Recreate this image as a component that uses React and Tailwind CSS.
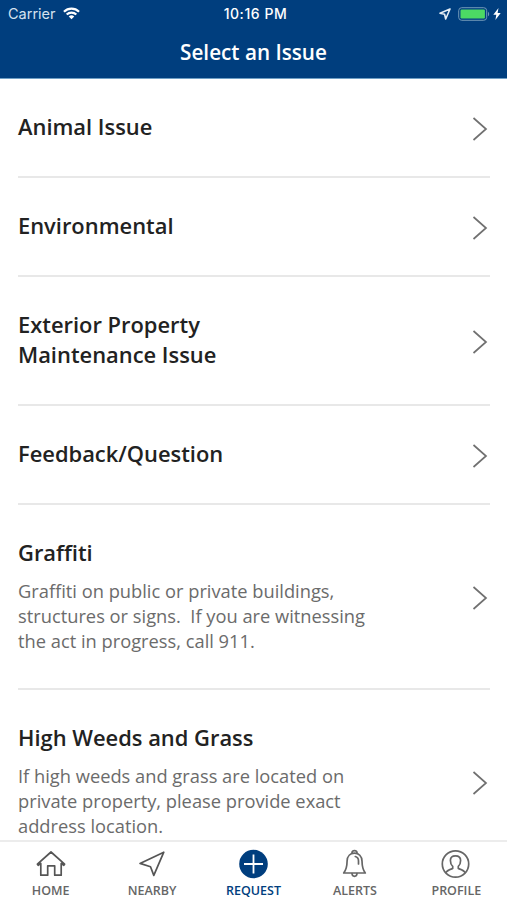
import React from "react";

const issues = [
  { title: "Animal Issue" },
  { title: "Environmental" },
  { title: "Exterior Property\nMaintenance Issue" },
  { title: "Feedback/Question" },
  {
    title: "Graffiti",
    description:
      "Graffiti on public or private buildings,\nstructures or signs.  If you are witnessing\nthe act in progress, call 911.",
  },
  {
    title: "High Weeds and Grass",
    description:
      "If high weeds and grass are located on\nprivate property, please provide exact\naddress location.",
  },
];

const HomeIcon = () => (
  <svg width="30" height="30" viewBox="0 0 30 30" fill="none" stroke="#555" strokeWidth="1.7" strokeLinejoin="round" strokeLinecap="round">
    <path d="M4.8 14.4 2.2 16.3 1.4 15.2 15 3l13.6 12.2-.8 1.1-2.6-1.9v11.8h-6.5v-9.4h-7v9.4H4.8z" />
  </svg>
);

const NearbyIcon = () => (
  <svg width="30" height="30" viewBox="0 0 30 30" fill="none" stroke="#555" strokeWidth="1.7" strokeLinejoin="round">
    <path d="M26.8 3.2 3 14.4l10.5 3.3 3.3 8.7z" />
  </svg>
);

const RequestIcon = () => (
  <svg width="30" height="30" viewBox="0 0 30 30" fill="none">
    <circle cx="14.5" cy="15" r="14.3" fill="#003e7e" />
    <path d="M14.5 5.5v19M5 15h19" stroke="#fff" strokeWidth="1.8" />
  </svg>
);

const AlertsIcon = () => (
  <svg width="30" height="30" viewBox="0 0 30 30" fill="none" stroke="#666" strokeWidth="1.7" strokeLinejoin="round" strokeLinecap="round">
    <path d="M12 3.8c.3-2.8 4.700-2.8 5 0" />
    <path d="M3.700 24c2.500-3 3.300-6 3.400-12 .1-4.800 3.200-7.900 7.400-7.900s7.400 3.100 7.500 7.900c.1 6 .8 9 3.300 12z" />
    <path d="M12 24.500c.2 3.700 4.800 3.700 5 0M15.300 7.500c2 .5 3.200 2 3.200 4.500v3" />
  </svg>
);

const ProfileIcon = () => (
  <svg width="30" height="30" viewBox="0 0 30 30" fill="none" stroke="#666" strokeWidth="1.7" strokeLinejoin="round">
    <circle cx="14.5" cy="15" r="13.2" />
    <path d="M4.900 23.800c.8-2.300 3.300-3 6.800-4.300v-2.200c-1.800-1.500-2.300-3.300-2.300-5.800 0-3.200 2-4.700 5.100-4.700s5.100 1.500 5.100 4.700c0 2.500-.5 4.300-2.300 5.800v2.200c3.500 1.300 6 2 6.800 4.300" />
  </svg>
);

const tabs = [
  { label: "HOME", icon: HomeIcon },
  { label: "NEARBY", icon: NearbyIcon },
  { label: "REQUEST", icon: RequestIcon, active: true },
  { label: "ALERTS", icon: AlertsIcon },
  { label: "PROFILE", icon: ProfileIcon },
];

const StatusBar = () => (
  <div className="grid h-[27px] grid-cols-3 items-center pl-2 pr-1 font-['Inter','Liberation_Sans',sans-serif] text-[14px] text-white">
    <div className="flex items-center gap-[7px]">
      <span className="text-[14.5px] text-[#d5e2ef]">Carrier</span>
      <svg width="17" height="13" viewBox="0 0 18 13" fill="none" stroke="#fff" strokeWidth="2.3">
        <path d="M1 4.600a11.500 11.500 0 0 1 16 0M3.900 7.600a7.400 7.400 0 0 1 10.200 0" />
        <path d="M9 12.600 6.100 9.700a4.200 4.200 0 0 1 5.800 0z" fill="#fff" stroke="none" />
      </svg>
    </div>
    <span className="text-center tracking-[0.04em] font-medium whitespace-nowrap">10:16 PM</span>
    <div className="flex items-center justify-end">
      <svg width="12" height="12" viewBox="0 0 12 12" fill="none" stroke="#e4edf5" strokeWidth="1.6" strokeLinejoin="round">
        <path d="M11 1 1 5.300l4.600 1L6.700 11z" />
      </svg>
      <svg className="ml-[7px]" width="32" height="14" viewBox="0 0 32 14" fill="none">
        <rect x=".7" y=".7" width="28" height="12.6" rx="3" stroke="#7199b8" />
        <rect x="2.5" y="2.5" width="24.4" height="9" rx="1.2" fill="#4cd964" />
        <path d="M30 4.700c1.600.7 1.600 3.900 0 4.600z" fill="#7199b8" />
      </svg>
      <svg className="ml-[3px] mr-[2px]" width="8" height="12" viewBox="0 0 8 12" fill="#fff">
        <path d="M5.500 0 .3 6.800h3L2.400 12l5.300-7H4.600z" />
      </svg>
    </div>
  </div>
);

const IssueRow = ({ title, description }) => (
  <li className="flex shrink-0 items-center justify-between border-b-2 border-[#e8e8e8] pt-[33px] pb-[34px]">
    <div className="whitespace-pre">
      <h2 className="text-[21.9px] leading-[30px] font-semibold text-[#222]">{title}</h2>
      {description && (
        <p className="mt-[10px] mb-px text-[18.3px] leading-[25px] text-[#6b6b6b]">{description}</p>
      )}
    </div>
    <svg className="mt-[3px] mr-[2px] shrink-0" width="16" height="24" viewBox="0 0 16 24" fill="none" stroke="#707070" strokeWidth="1.7">
      <path d="M1.500 1 14 12 1.500 23" />
    </svg>
  </li>
);

const App = () => {
  return (
    <div className="flex h-[900px] w-[507px] flex-col overflow-hidden bg-white font-['Open_Sans','Noto_Sans',sans-serif]">
      <header className="h-[79px] shrink-0 border-b border-[#6f9fc5] bg-[#003e7e]">
        <StatusBar />
        <h1 className="mt-[10px] text-center text-[20.7px] leading-[30px] font-semibold text-white">
          Select an Issue
        </h1>
      </header>

      <ul className="flex min-h-0 flex-1 flex-col overflow-hidden pr-[17px] pl-[18px]">
        {issues.map((issue) => (
          <IssueRow key={issue.title} {...issue} />
        ))}
      </ul>

      <nav className="flex h-[60px] shrink-0 border-t-2 border-[#ececec] bg-white">
        {tabs.map(({ label, icon: Icon, active }) => (
          <button key={label} className="flex flex-1 flex-col items-center pt-[7px]">
            <Icon />
            <span
              className={`mt-[4px] text-[12.5px] leading-[16px] font-semibold ${
                active ? "text-[#003e7e]" : "text-[#666]"
              }`}
            >
              {label}
            </span>
          </button>
        ))}
      </nav>
    </div>
  );
};

export default App;
